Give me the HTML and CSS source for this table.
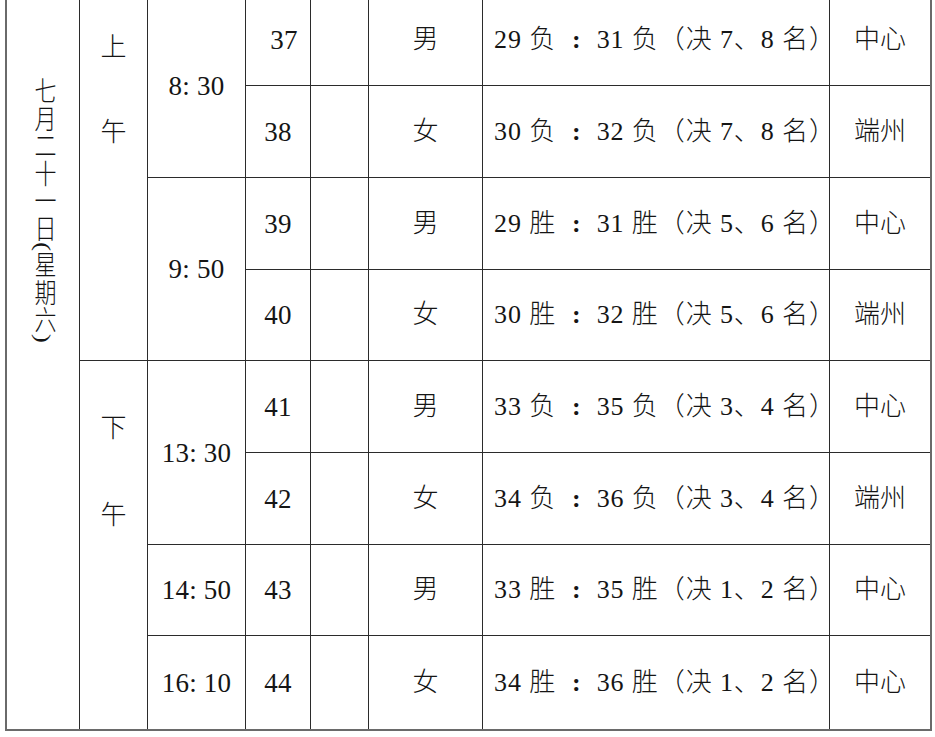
FILE: index.html
```html
<!DOCTYPE html>
<html lang="zh-CN">
<head>
<meta charset="utf-8">
<title>赛程表</title>
<link rel="stylesheet" href="styles.css">
</head>
<body>
<div class="sheet">
  <div class="cell date"><span class="vtext">七月二十一日(星期六)</span></div>
  <div class="cell half am"><span>上</span><span class="second">午</span></div>
  <div class="cell half pm"><span>下</span><span class="second">午</span></div>

  <div class="cell time tm-a">8: 30</div>
  <div class="cell time tm-b">9: 50</div>
  <div class="cell time tm-c">13: 30</div>
  <div class="cell time tm-d">14: 50</div>
  <div class="cell time tm-e">16: 10</div>

  <div class="cell num num-first">37</div><div class="cell blank"></div><div class="cell sex">男</div><div class="cell match">29 负<span class="colon">:</span>31 负（决 7、8 名）</div><div class="cell venue">中心</div>
  <div class="cell num">38</div><div class="cell blank"></div><div class="cell sex">女</div><div class="cell match">30 负<span class="colon">:</span>32 负（决 7、8 名）</div><div class="cell venue">端州</div>
  <div class="cell num">39</div><div class="cell blank"></div><div class="cell sex">男</div><div class="cell match">29 胜<span class="colon">:</span>31 胜（决 5、6 名）</div><div class="cell venue">中心</div>
  <div class="cell num">40</div><div class="cell blank"></div><div class="cell sex">女</div><div class="cell match">30 胜<span class="colon">:</span>32 胜（决 5、6 名）</div><div class="cell venue">端州</div>
  <div class="cell num">41</div><div class="cell blank"></div><div class="cell sex">男</div><div class="cell match">33 负<span class="colon">:</span>35 负（决 3、4 名）</div><div class="cell venue">中心</div>
  <div class="cell num">42</div><div class="cell blank"></div><div class="cell sex">女</div><div class="cell match">34 负<span class="colon">:</span>36 负（决 3、4 名）</div><div class="cell venue">端州</div>
  <div class="cell num">43</div><div class="cell blank"></div><div class="cell sex">男</div><div class="cell match">33 胜<span class="colon">:</span>35 胜（决 1、2 名）</div><div class="cell venue">中心</div>
  <div class="cell num">44</div><div class="cell blank"></div><div class="cell sex">女</div><div class="cell match">34 胜<span class="colon">:</span>36 胜（决 1、2 名）</div><div class="cell venue">中心</div>
</div>
</body>
</html>
```

FILE: styles.css
```css
html, body {
  margin: 0;
  padding: 0;
  background: #ffffff;
}

body {
  font-family: "Liberation Serif", "Noto Sans CJK SC", serif;
  font-size: 26px;
  color: #151515;
  overflow: hidden;
  text-spacing-trim: space-all;
}

.sheet {
  display: grid;
  grid-template-columns: 72px 67px 97px 64px 57px 113px 346px 100px;
  grid-template-rows: 91px 91px 91px 90px 91px 91px 90px 93px;
  gap: 1px;
  background: #2b2b2b;
  border-left: 2px solid #6a6a6a;
  border-right: 2px solid #6a6a6a;
  border-bottom: 2px solid #6a6a6a;
  margin: -6px 0 0 5px;
  width: max-content;
}

.cell {
  background: #ffffff;
  display: flex;
  align-items: center;
  justify-content: center;
  line-height: 26px;
  white-space: pre;
}

.date {
  grid-column: 1;
  grid-row: 1 / span 8;
  align-items: flex-start;
  padding-top: 83px;
}

.vtext {
  writing-mode: vertical-rl;
  font-size: 27.5px;
  line-height: 27px;
  font-weight: 300;
  transform: scaleX(0.8);
}

.half {
  grid-column: 2;
  flex-direction: column;
  justify-content: flex-start;
  font-weight: 300;
}

.am {
  grid-row: 1 / span 4;
  padding-top: 41px;
}

.am .second {
  margin-top: 59px;
}

.pm {
  grid-row: 5 / span 4;
  padding-top: 55px;
}

.pm .second {
  margin-top: 61px;
}

.time {
  grid-column: 3;
  font-size: 27px;
  letter-spacing: 0.2px;
}

.tm-a { grid-row: 1 / span 2; }
.tm-b { grid-row: 3 / span 2; }
.tm-c { grid-row: 5 / span 2; }
.tm-d { grid-row: 7; }
.tm-e { grid-row: 8; }

.num {
  font-size: 27px;
  letter-spacing: 0.3px;
}

.num-first {
  padding-left: 12px;
}

.sex,
.venue {
  font-weight: 300;
}

.match {
  justify-content: flex-start;
  padding-left: 11px;
  letter-spacing: 0.9px;
  font-weight: 300;
}

.colon {
  margin: 0 15px 0 16px;
  font-weight: 700;
}
```
